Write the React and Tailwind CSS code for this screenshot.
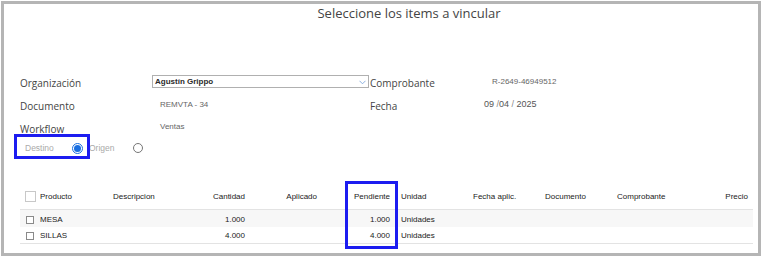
import React from 'react';

const rows = [
  { producto: 'MESA', cantidad: '1.000', pendiente: '1.000', unidad: 'Unidades' },
  { producto: 'SILLAS', cantidad: '4.000', pendiente: '4.000', unidad: 'Unidades' },
];

function Radio({ checked }) {
  if (checked) {
    return (
      <span className="w-[11px] h-[11px] rounded-full border border-[#1a6fe0] flex items-center justify-center shrink-0">
        <span className="w-[7px] h-[7px] rounded-full bg-[#1a6fe0]" />
      </span>
    );
  }
  return <span className="w-[10px] h-[10px] rounded-full border border-[#767676] shrink-0" />;
}

function FormRow({ label, value, label2, value2, h }) {
  return (
    <div className={`grid grid-cols-[132px_218px_114px_1fr] ${h}`}>
      <div className="flex items-center text-[10px] text-[#444] font-['Open_Sans',sans-serif]">{label}</div>
      <div className="flex items-center pb-[4px]">{value}</div>
      <div className="flex items-center text-[10px] text-[#444] font-['Open_Sans',sans-serif]">{label2}</div>
      <div className="flex items-center pb-[4px]">{value2}</div>
    </div>
  );
}

export default function App() {
  return (
    <div className="w-[764px] h-[258px] bg-white pt-px pl-px font-['Liberation_Sans',Arial,sans-serif]">
      <div className="w-[760px] h-[255px] border-[3px] border-[#b5b5b5] bg-white">
        <div className="pl-[56px] text-center text-[13px] leading-[18px] text-[#444] font-['Open_Sans',sans-serif]">
          Seleccione los items a vincular
        </div>

        <div className="mt-[50px] pl-[16px]">
          <FormRow
            h="h-[23px]"
            label="Organización"
            value={
              <div className="w-[217px] h-[13px] border border-[#b0b0b0] flex items-center justify-between pl-[2px] pr-[2px]">
                <span className="text-[8px] leading-[10px] font-bold text-[#2a2a2a]">Agustín Grippo</span>
                <svg width="7" height="5" viewBox="0 0 7 5" className="mt-[1px]">
                  <path d="M0.5 0.8 L3.5 3.8 L6.5 0.8" fill="none" stroke="#7fa8dc" strokeWidth="0.9" />
                </svg>
              </div>
            }
            label2="Comprobante"
            value2={<span className="pl-[8px] text-[8px] text-[#666]">R-2649-46949512</span>}
          />
          <FormRow
            h="h-[23px]"
            label="Documento"
            value={<span className="pl-[8px] text-[8px] text-[#666]">REMVTA - 34</span>}
            label2="Fecha"
            value2={
              <span className="text-[9px] text-[#555]">
                09 <span className="text-[#888]">/</span>04 <span className="text-[#888]">/</span> 2025
              </span>
            }
          />
          <FormRow
            h="h-[22px]"
            label="Workflow"
            value={<span className="pl-[8px] text-[8px] text-[#666]">Ventas</span>}
            label2=""
            value2={null}
          />
        </div>

        <div className="relative flex items-center h-[16px] pl-[21px] text-[8.5px] text-[#aaa]">
          <span className="w-[47px]">Destino</span>
          <Radio checked />
          <span className="ml-[6px] w-[44px]">Origen</span>
          <Radio />
          <div className="absolute left-[10px] top-[-6px] w-[76px] h-[25px] border-[3px] border-[#1c1cf0]" />
        </div>

        <div className="relative ml-[16px] mt-[28px] w-[733px] text-[8px] text-[#222]">
          <div className="grid grid-cols-[20px_73px_72px_72px_72px_72px_72px_72px_72px_72px_64px] h-[26px] items-center border-b border-[#e3e3e3]">
            <div className="pl-[5px]">
              <span className="block w-[11px] h-[11px] border border-[#c8c8c8] bg-white" />
            </div>
            <div>Producto</div>
            <div>Descripcion</div>
            <div className="text-right pr-[12px]">Cantidad</div>
            <div className="text-right pr-[12px]">Aplicado</div>
            <div className="text-right pr-[11px]">Pendiente</div>
            <div>Unidad</div>
            <div>Fecha aplic.</div>
            <div>Documento</div>
            <div>Comprobante</div>
            <div className="text-right pr-[5px]">Precio</div>
          </div>
          {rows.map((r, i) => (
            <div
              key={r.producto}
              className={`grid grid-cols-[20px_73px_72px_72px_72px_72px_72px_72px_72px_72px_64px] h-[17px] pt-[2px] items-center ${
                i === 0 ? 'bg-[#f7f7f7]' : 'bg-white border-b border-[#e3e3e3]'
              }`}
            >
              <div className="pl-[6px]">
                <span className="block w-[8px] h-[8px] border border-[#8a8a8a] bg-white" />
              </div>
              <div>{r.producto}</div>
              <div></div>
              <div className="text-right pr-[12px]">{r.cantidad}</div>
              <div></div>
              <div className="text-right pr-[11px]">{r.pendiente}</div>
              <div>{r.unidad}</div>
              <div></div>
              <div></div>
              <div></div>
              <div></div>
            </div>
          ))}
          <div className="absolute left-[325px] top-[-3px] w-[53px] h-[68px] border-[3px] border-[#1c1cf0]" />
        </div>
      </div>
    </div>
  );
}
